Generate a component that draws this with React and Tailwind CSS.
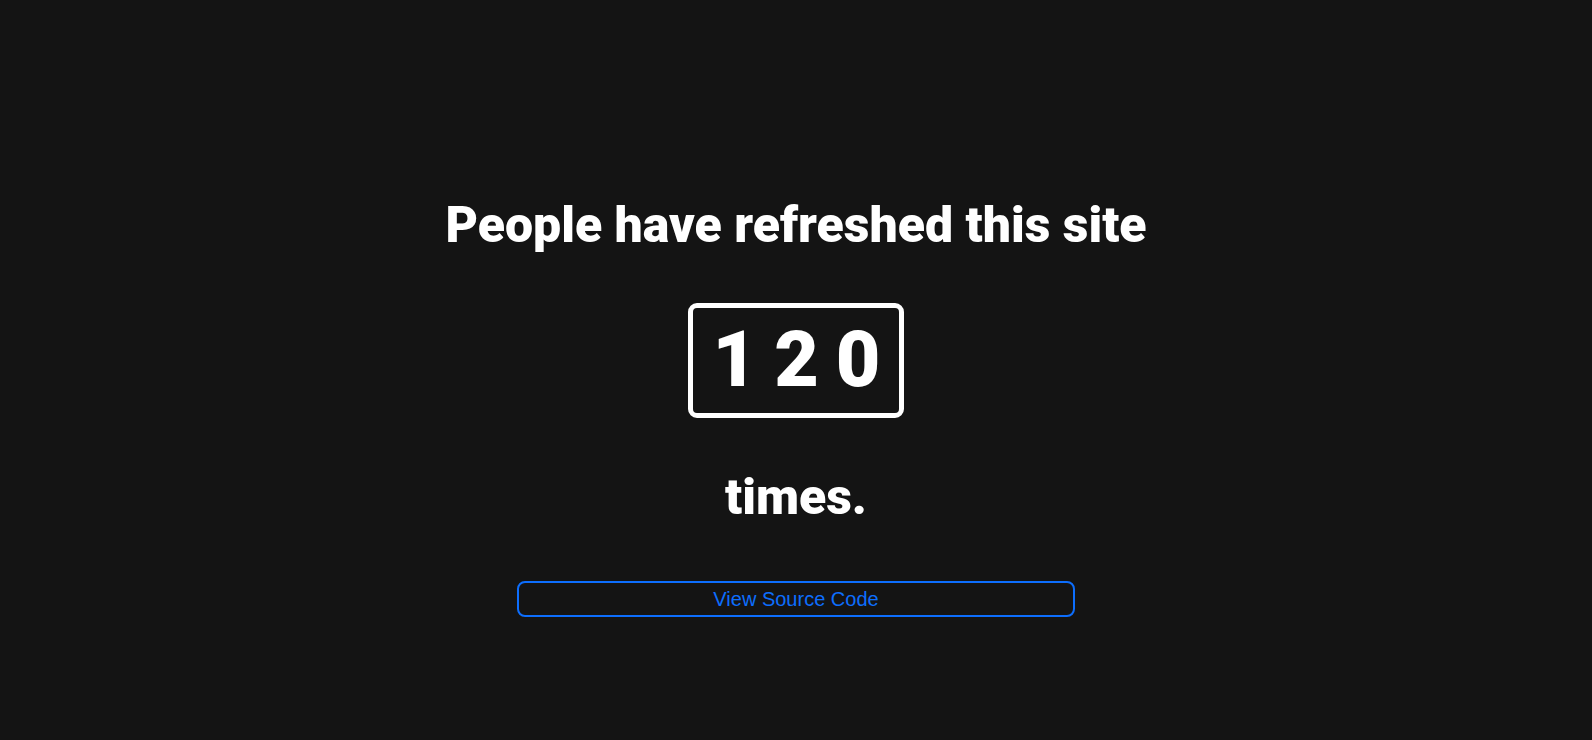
export default function App() {
  const digits = ["1", "2", "0"];
  return (
    <div className="min-h-screen w-full bg-[#141414] flex flex-col items-center pt-[192px] font-['Roboto',sans-serif] text-white">
      <h1 className="text-[50px] font-black leading-[66px]">People have refreshed this site</h1>
      <div className="mt-[45px] flex items-center gap-[17px] rounded-[9px] border-[5px] border-white pl-[20px] pr-[19px] h-[115px]">
        {digits.map((d, i) => (
          <span key={i} className="text-[77px] font-black leading-none">
            {d}
          </span>
        ))}
      </div>
      <h2 className="mt-[46px] text-[50px] font-black leading-[66px]">times.</h2>
      <button className="mt-[51px] w-[558px] h-[36px] rounded-[8px] border-2 border-[#0d6efd] text-[#0d6efd] text-[20px] leading-none font-['Liberation_Sans',Arial,sans-serif]">
        View Source Code
      </button>
    </div>
  );
}
